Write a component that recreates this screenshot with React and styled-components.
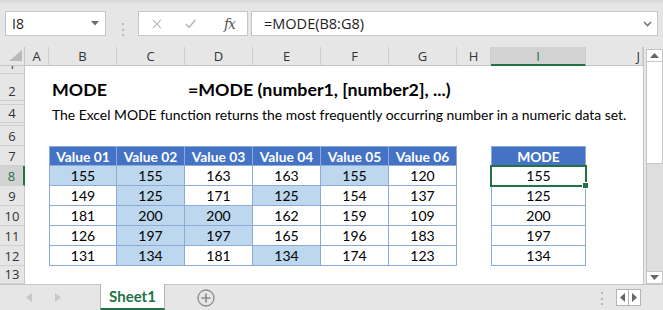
import styled, { createGlobalStyle } from 'styled-components';

const GREEN = '#217346';
const UI = `"Open Sans", "Noto Sans", sans-serif`;
const CELL = `Lato, "Open Sans", sans-serif`;

const colLetters = ['A', 'B', 'C', 'D', 'E', 'F', 'G', 'H', 'I', 'J'];
const rowHeights = [8, 27, 4, 18, 3, 20, 20, 20, 20, 20, 20, 20, 18];

const values = [
  [155, 155, 163, 163, 155, 120],
  [149, 125, 171, 125, 154, 137],
  [181, 200, 200, 162, 159, 109],
  [126, 197, 197, 165, 196, 183],
  [131, 134, 181, 134, 174, 123],
];
const modes = [155, 125, 200, 197, 134];

const GlobalStyle = createGlobalStyle`
  html, body { margin: 0; padding: 0; background: #fff; }
  * { box-sizing: border-box; }
`;

export default function App() {
  const cells = [];
  cells.push(<Corner key="corner"><svg width="25" height="19"><polygon points="9,14 22,14 22,3" fill="#b9b9b9" /></svg></Corner>);
  colLetters.forEach(l => {
    cells.push(
      <ColHead key={'h' + l} $active={l === 'I'} $end={l === 'J'}>{l}</ColHead>
    );
  });

  rowHeights.forEach((_, i) => {
    const r = i + 1;
    cells.push(<RowHead key={'r' + r} $active={r === 8}>{r}</RowHead>);
    colLetters.forEach((l, c) => {
      const key = l + r;
      let content = null;
      if (r === 2 && l === 'B') content = <Title>MODE</Title>;
      if (r === 2 && l === 'D') content = <Title>=MODE (number1, [number2], ...)</Title>;
      if (r === 4 && l === 'B') content = <Text>The Excel MODE function returns the most frequently occurring number in a numeric data set.</Text>;

      if (r === 7 && c >= 1 && c <= 6) {
        cells.push(<TableHead key={key} $first={c === 1}>Value 0{c}</TableHead>);
        return;
      }
      if (r === 7 && l === 'I') {
        cells.push(<TableHead key={key} $first>MODE</TableHead>);
        return;
      }
      if (r >= 8 && r <= 12 && c >= 1 && c <= 6) {
        const v = values[r - 8][c - 1];
        cells.push(
          <TableCell key={key} $first={c === 1} $hl={v === modes[r - 8]}>{v}</TableCell>
        );
        return;
      }
      if (r >= 8 && r <= 12 && l === 'I') {
        cells.push(
          <TableCell key={key} $first $selected={r === 8}>{modes[r - 8]}</TableCell>
        );
        return;
      }
      cells.push(<Cell key={key}>{content}</Cell>);
    });
  });

  return (
    <Window>
      <GlobalStyle />
      <FormulaBar>
        <NameBox>
          <span>I8</span>
          <Caret viewBox="0 0 8 5"><polygon points="0,0 8,0 4,4.5" /></Caret>
        </NameBox>
        <Dots $left={15} $right={14}>⋮</Dots>
        <ButtonsBox>
          <svg width="12" height="12" viewBox="0 0 12 12"><path d="M1 1 L11 11 M11 1 L1 11" stroke="#b3b3b3" strokeWidth="1.3" /></svg>
          <svg width="14" height="12" viewBox="0 0 14 12"><path d="M1 6 L5 10 L13 1" stroke="#b3b3b3" strokeWidth="1.6" fill="none" /></svg>
          <Fx>fx</Fx>
        </ButtonsBox>
        <FormulaInput>
          <span>=MODE(B8:G8)</span>
          <svg width="9" height="6" viewBox="0 0 9 6"><path d="M1 1 L4.5 4.5 L8 1" stroke="#777" strokeWidth="1.6" fill="none" /></svg>
        </FormulaInput>
      </FormulaBar>
      <Main>
        <Sheet>{cells}</Sheet>
        <VScroll>
          <ScrollButton><svg width="9" height="5"><polygon points="0,5 9,5 4.5,0" fill="#666" /></svg></ScrollButton>
          <Thumb />
          <Track />
          <ScrollButton><svg width="9" height="5"><polygon points="0,0 9,0 4.5,5" fill="#666" /></svg></ScrollButton>
        </VScroll>
      </Main>
      <TabBar>
        <TabNav>
          <svg width="6" height="9"><polygon points="6,0 6,9 0,4.5" fill="#c8c8c8" /></svg>
          <svg width="6" height="9"><polygon points="0,0 0,9 6,4.5" fill="#c8c8c8" /></svg>
        </TabNav>
        <SheetTab>Sheet1</SheetTab>
        <AddSheet>
          <svg width="18" height="18" viewBox="0 0 18 18">
            <circle cx="9" cy="9" r="8" stroke="#8a8a8a" strokeWidth="1.3" fill="none" />
            <path d="M9 4.5 V13.5 M4.5 9 H13.5" stroke="#8a8a8a" strokeWidth="1.6" />
          </svg>
        </AddSheet>
        <TabSpacer />
        <Dots $left={0} $right={13}>⋮</Dots>
        <HScrollNav>
          <svg width="5" height="9"><polygon points="5,0 5,9 0,4.5" fill="#666" /></svg>
          <NavDivider />
          <svg width="5" height="9"><polygon points="0,0 0,9 5,4.5" fill="#666" /></svg>
        </HScrollNav>
      </TabBar>
    </Window>
  );
}

const Window = styled.div`
  width: 663px;
  height: 310px;
  background: #e6e6e6;
  display: flex;
  flex-direction: column;
  overflow: hidden;
  font-family: ${UI};
`;

const FormulaBar = styled.div`
  height: 47px;
  display: flex;
  align-items: flex-start;
  padding: 11px 5px 0 5px;
  background: linear-gradient(#d8d8d8 0px, #e6e6e6 5px);
`;

const NameBox = styled.div`
  width: 101px;
  height: 25px;
  background: #fff;
  border: 1px solid #c6c6c6;
  display: flex;
  align-items: center;
  justify-content: space-between;
  padding: 0 6px 0 6px;
  font-size: 14px;
  color: #222;
`;

const Caret = styled.svg`
  width: 8px;
  height: 5px;
  fill: #6e6e6e;
`;

const Dots = styled.div`
  width: 3px;
  margin: 0 ${p => p.$right}px 0 ${p => p.$left}px;
  align-self: center;
  font-size: 16px;
  line-height: 16px;
  color: #b0b0b0;
  display: flex;
  justify-content: center;
`;

const ButtonsBox = styled.div`
  width: 110px;
  height: 25px;
  background: #fff;
  border: 1px solid #c6c6c6;
  display: flex;
  align-items: center;
  padding: 0 12px 0 13px;
  gap: 23px;
`;

const Fx = styled.span`
  font-family: "DejaVu Serif", "Liberation Serif", serif;
  font-style: italic;
  font-size: 14px;
  color: #555;
  margin-left: 5px;
  letter-spacing: -1px;
`;

const FormulaInput = styled.div`
  flex: 1;
  height: 25px;
  margin-left: 3px;
  background: #fff;
  border: 1px solid #c6c6c6;
  display: flex;
  align-items: center;
  justify-content: space-between;
  padding: 0 5px 0 12px;
  font-size: 14.5px;
  color: #222;
`;

const Main = styled.div`
  display: flex;
  height: 237px;
`;

const Sheet = styled.div`
  width: 644px;
  display: grid;
  grid-template-columns: 25px 24px repeat(6, 68px) 34px 95px 57px;
  grid-template-rows: 19px ${rowHeights.map(h => h + 'px').join(' ')};
  background: #fff;
  border-right: 1px solid #c6c6c6;
  overflow: hidden;
`;

const Corner = styled.div`
  background: #e6e6e6;
  border-right: 1px solid #c6c6c6;
  border-bottom: 1px solid #c6c6c6;
  display: flex;
`;

const ColHead = styled.div`
  background: ${p => (p.$active ? '#d2d2d2' : '#e6e6e6')};
  border-right: 1px solid #cdcdcd;
  border-bottom: ${p => (p.$active ? `2px solid ${GREEN}` : '1px solid #c6c6c6')};
  display: flex;
  align-items: center;
  justify-content: ${p => (p.$end ? 'flex-end' : 'center')};
  padding-right: ${p => (p.$end ? '2px' : '0')};
  font-size: 13px;
  color: ${p => (p.$active ? GREEN : '#333')};
`;

const RowHead = styled.div`
  background: ${p => (p.$active ? '#d2d2d2' : '#e6e6e6')};
  border-right: ${p => (p.$active ? `2px solid ${GREEN}` : '1px solid #c6c6c6')};
  border-bottom: 1px solid #d0d0d0;
  display: flex;
  align-items: flex-end;
  justify-content: center;
  overflow: hidden;
  font-size: 13px;
  line-height: 18px;
  color: ${p => (p.$active ? GREEN : '#333')};
`;

const Cell = styled.div`
  display: flex;
  align-items: flex-end;
  min-width: 0;
  white-space: nowrap;
  padding: 0 3px 0 3px;
  font-family: ${CELL};
  color: #000;
`;

const Title = styled.span`
  font-size: 17.8px;
  font-weight: 700;
  line-height: 24px;
`;

const Text = styled.span`
  font-size: 13.9px;
  line-height: 17px;
`;

const TableHead = styled.div`
  background: #4472c4;
  color: #fff;
  font-family: ${CELL};
  font-weight: 700;
  font-size: 13.8px;
  display: flex;
  align-items: center;
  justify-content: center;
  border-top: 1px solid #8eaadb;
  border-right: 1px solid #8eaadb;
  border-left: ${p => (p.$first ? '1px solid #8eaadb' : 'none')};
  border-bottom: 1px solid #8eaadb;
`;

const TableCell = styled.div`
  position: relative;
  background: ${p => (p.$hl ? '#bdd7ee' : '#fff')};
  font-family: ${CELL};
  font-size: 14px;
  color: #000;
  display: flex;
  align-items: center;
  justify-content: center;
  border-right: 1px solid #8eaadb;
  border-left: ${p => (p.$first ? '1px solid #8eaadb' : 'none')};
  border-bottom: 1px solid #8eaadb;
  ${p => p.$selected && `
    outline: 2px solid ${GREEN};
    outline-offset: -1px;
    z-index: 1;
    &::after {
      content: '';
      position: absolute;
      right: -4px;
      bottom: -4px;
      width: 5px;
      height: 5px;
      background: ${GREEN};
      border: 1px solid #fff;
      box-sizing: content-box;
    }
  `}
`;

const VScroll = styled.div`
  width: 17px;
  margin: 2px 0 0 2px;
  display: flex;
  flex-direction: column;
  border-left: 1px solid #c6c6c6;
`;

const ScrollButton = styled.div`
  height: 13px;
  background: #fff;
  border: 1px solid #c6c6c6;
  border-left: none;
  display: flex;
  align-items: center;
  justify-content: center;
`;

const Thumb = styled.div`
  height: 102px;
  background: #fff;
  border-right: 1px solid #c6c6c6;
  border-bottom: 1px solid #c6c6c6;
`;

const Track = styled.div`
  flex: 1;
  background: #dedede;
`;

const TabBar = styled.div`
  height: 26px;
  display: flex;
  align-items: stretch;
  border-top: 1px solid #c6c6c6;
  background: #e6e6e6;
`;

const TabNav = styled.div`
  width: 100px;
  display: flex;
  align-items: center;
  padding-left: 26px;
  gap: 23px;
`;

const SheetTab = styled.div`
  width: 65px;
  margin-top: -1px;
  background: #fff;
  border-left: 1px solid #b5b5b5;
  border-right: 1px solid #b5b5b5;
  border-bottom: 2px solid ${GREEN};
  display: flex;
  align-items: center;
  justify-content: center;
  font-family: ${CELL};
  font-weight: 700;
  font-size: 15px;
  color: ${GREEN};
`;

const AddSheet = styled.div`
  display: flex;
  align-items: center;
  padding-left: 32px;
`;

const TabSpacer = styled.div`
  flex: 1;
`;

const HScrollNav = styled.div`
  width: 25px;
  height: 17px;
  align-self: center;
  margin-right: 22px;
  background: #fff;
  border: 1px solid #b5b5b5;
  display: flex;
  align-items: center;
  justify-content: space-around;
  padding: 0 2px;
`;

const NavDivider = styled.div`
  width: 1px;
  height: 15px;
  background: #b5b5b5;
`;
